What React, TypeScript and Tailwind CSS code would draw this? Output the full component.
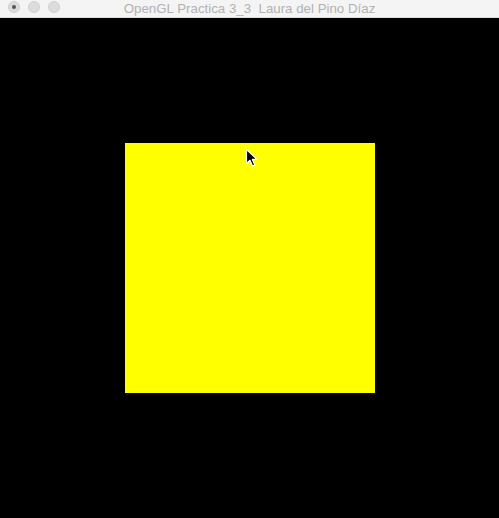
import React from "react";

export default function App() {
  return (
    <div className="w-[499px] h-[518px] bg-black flex flex-col overflow-hidden">
      <div className="relative h-[18px] bg-[#f4f4f4] border-b border-[#dcdcdc] flex items-center justify-center shrink-0">
        <div className="absolute left-[8px] top-[1px] flex gap-[8px]">
          <div className="w-[12px] h-[12px] rounded-full bg-[#dcdcdc] border border-[#d0d0d0] flex items-center justify-center">
            <div className="w-[4px] h-[4px] rounded-full bg-[#555]" />
          </div>
          <div className="w-[12px] h-[12px] rounded-full bg-[#dcdcdc] border border-[#d0d0d0]" />
          <div className="w-[12px] h-[12px] rounded-full bg-[#dcdcdc] border border-[#d0d0d0]" />
        </div>
        <span className="text-[13.3px] leading-none text-[#b2b2b2] whitespace-pre" style={{ fontFamily: '"Liberation Sans", Arial, sans-serif' }}>
          {"OpenGL Practica 3_3  Laura del Pino Díaz"}
        </span>
      </div>
      <div className="flex-1 flex items-start justify-center pt-[125px]">
        <div className="relative w-[250px] h-[250px] bg-[#ffff00]">
          <svg className="absolute left-[120px] top-[5px]" width="14" height="20" viewBox="0 0 14 20">
            <path d="M1.5 1.5 L1.5 15.5 L5 12.3 L7.5 18 L9.8 17 L7.4 11.4 L12 11.4 Z" fill="#000" stroke="#fff" strokeWidth="1.2" strokeLinejoin="round" />
          </svg>
        </div>
      </div>
    </div>
  );
}
